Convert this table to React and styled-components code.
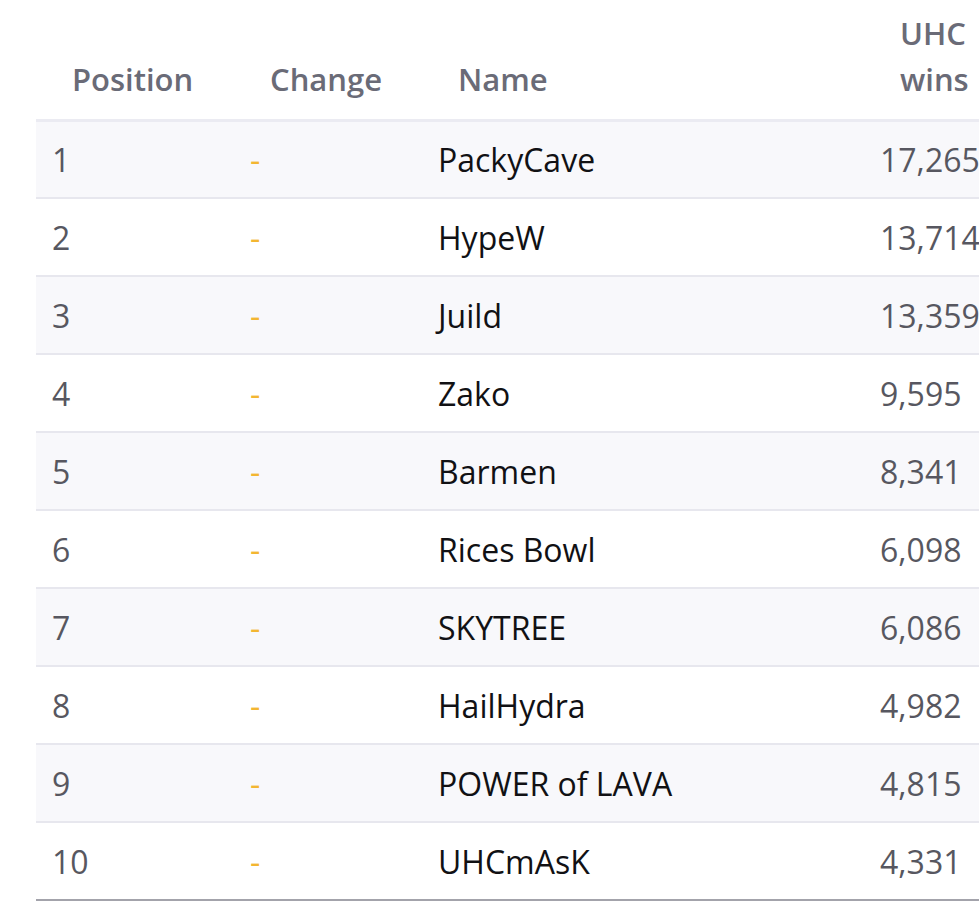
import React from 'react'
import styled, { createGlobalStyle } from 'styled-components'

const GlobalStyle = createGlobalStyle`
  html, body {
    margin: 0;
    padding: 0;
    background: #ffffff;
  }
  body {
    font-family: "Open Sans", "Noto Sans", sans-serif;
  }
`

const Page = styled.div`
  width: 979px;
  height: 903px;
  overflow: hidden;
  padding-left: 36px;
  box-sizing: border-box;
`

const Table = styled.table`
  width: 1020px;
  border-collapse: collapse;
  table-layout: fixed;
  font-family: "Open Sans", "Noto Sans", sans-serif;
  border-bottom: 2px solid #a3a3ab;
`

const HeadCell = styled.th`
  box-sizing: border-box;
  height: 120px;
  padding: 0 16px 17px 36px;
  vertical-align: bottom;
  text-align: left;
  font-size: 31px;
  font-weight: 600;
  line-height: 46px;
  color: #6a6b77;
  border-bottom: 3px solid #ebebf2;
  width: ${p => p.$w}px;
`

const Row = styled.tr`
  background: ${p => (p.$striped ? '#f8f8fb' : '#ffffff')};
  border-bottom: ${p => (p.$last ? 'none' : '2px solid #e7e7ee')};
`

const Cell = styled.td`
  box-sizing: border-box;
  height: 78px;
  padding: 2px 16px 0;
  vertical-align: middle;
  font-size: 32px;
  line-height: 44px;
  white-space: nowrap;
  color: ${p => p.$color || '#575760'};
`

const Dash = styled.span`
  color: #f3b632;
`

const columns = [
  { key: 'pos', label: 'Position', w: 198 },
  { key: 'change', label: 'Change', w: 188 },
  { key: 'name', label: 'Name', w: 442 },
  { key: 'wins', label: <>UHC<br />wins</>, w: 192 },
]

const players = [
  ['PackyCave', '17,265'],
  ['HypeW', '13,714'],
  ['Juild', '13,359'],
  ['Zako', '9,595'],
  ['Barmen', '8,341'],
  ['Rices Bowl', '6,098'],
  ['SKYTREE', '6,086'],
  ['HailHydra', '4,982'],
  ['POWER of LAVA', '4,815'],
  ['UHCmAsK', '4,331'],
]

export default function App() {
  return (
    <>
      <GlobalStyle />
      <Page>
        <Table>
          <thead>
            <tr>
              {columns.map(c => (
                <HeadCell key={c.key} $w={c.w}>{c.label}</HeadCell>
              ))}
            </tr>
          </thead>
          <tbody>
            {players.map(([name, wins], i) => (
              <Row key={name} $striped={i % 2 === 0} $last={i === players.length - 1}>
                <Cell>{i + 1}</Cell>
                <Cell><Dash>-</Dash></Cell>
                <Cell $color="#111114">{name}</Cell>
                <Cell>{wins}</Cell>
              </Row>
            ))}
          </tbody>
        </Table>
      </Page>
    </>
  )
}
